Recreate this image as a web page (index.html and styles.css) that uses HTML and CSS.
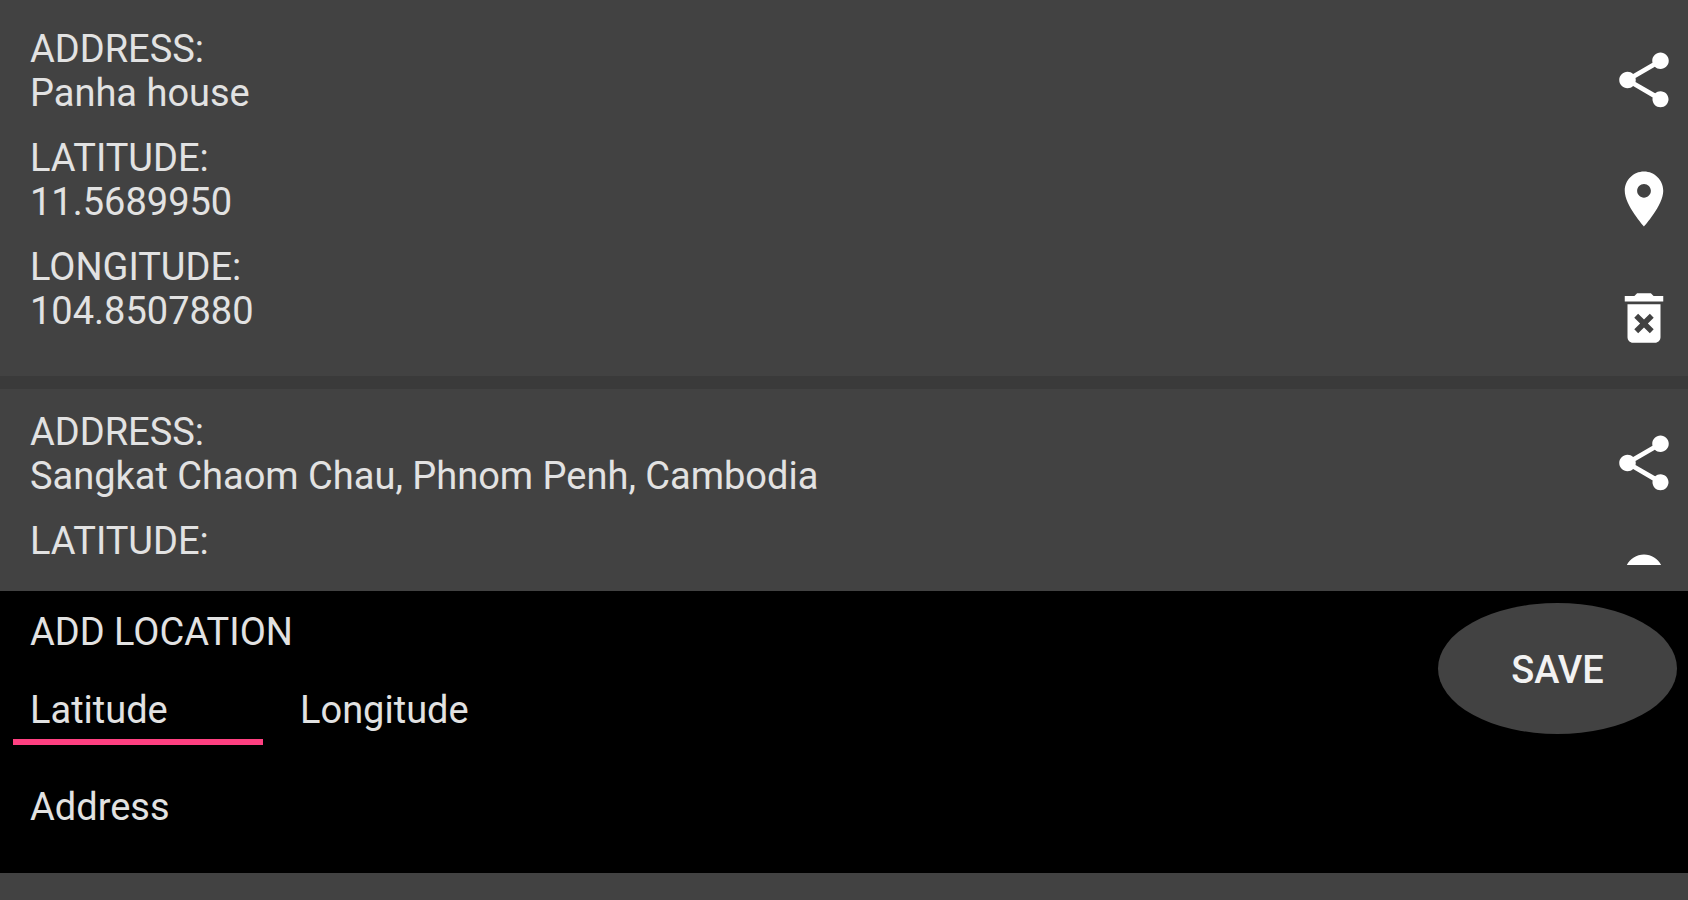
FILE: index.html
```html
<!DOCTYPE html>
<html lang="en">
<head>
  <meta charset="UTF-8">
  <meta name="viewport" content="width=device-width, initial-scale=1">
  <title>Locations</title>
  <link rel="stylesheet" href="styles.css">
</head>
<body>
  <!-- icon shapes shared by every card -->
  <svg class="sprite" aria-hidden="true">
    <symbol id="share" viewBox="0 0 24 24">
      <path d="M18 16.08c-.76 0-1.44.3-1.96.77L8.91 12.7c.05-.23.09-.46.09-.7s-.04-.47-.09-.7l7.05-4.11c.54.5 1.25.81 2.04.81 1.66 0 3-1.34 3-3s-1.34-3-3-3-3 1.34-3 3c0 .24.04.47.09.7L8.04 9.81C7.5 9.31 6.79 9 6 9c-1.66 0-3 1.34-3 3s1.34 3 3 3c.79 0 1.5-.31 2.04-.81l7.12 4.16c-.05.21-.08.43-.08.65 0 1.61 1.31 2.92 2.92 2.92s2.92-1.31 2.92-2.92-1.31-2.92-2.92-2.92z"/>
    </symbol>
    <symbol id="place" viewBox="0 0 24 24">
      <path d="M12 2C8.13 2 5 5.13 5 9c0 5.25 7 13 7 13s7-7.75 7-13c0-3.87-3.13-7-7-7zm0 9.5c-1.38 0-2.5-1.12-2.5-2.5s1.12-2.5 2.5-2.5 2.5 1.12 2.5 2.5-1.12 2.5-2.5 2.5z"/>
    </symbol>
    <symbol id="delete" viewBox="0 0 24 24">
      <path d="M6 19c0 1.1.9 2 2 2h8c1.1 0 2-.9 2-2V7H6v12zm2.46-7.12l1.41-1.41L12 12.59l2.12-2.12 1.41 1.41L13.41 14l2.12 2.12-1.41 1.41L12 15.41l-2.12 2.12-1.41-1.41L10.59 14l-2.13-2.12zM15.5 4l-1-1h-5l-1 1H5v2h14V4z"/>
    </symbol>
  </svg>

  <main class="list">
    <article class="card">
      <dl class="info">
        <div>
          <dt>ADDRESS:</dt>
          <dd>Panha house</dd>
        </div>
        <div>
          <dt>LATITUDE:</dt>
          <dd>11.5689950</dd>
        </div>
        <div>
          <dt>LONGITUDE:</dt>
          <dd>104.8507880</dd>
        </div>
      </dl>
      <div class="actions">
        <button class="icon-btn" aria-label="Share"><svg><use href="#share"/></svg></button>
        <button class="icon-btn" aria-label="Show on map"><svg><use href="#place"/></svg></button>
        <button class="icon-btn" aria-label="Delete"><svg><use href="#delete"/></svg></button>
      </div>
    </article>

    <article class="card">
      <dl class="info">
        <div>
          <dt>ADDRESS:</dt>
          <dd>Sangkat Chaom Chau, Phnom Penh, Cambodia</dd>
        </div>
        <div>
          <dt>LATITUDE:</dt>
        </div>
      </dl>
      <div class="actions">
        <button class="icon-btn" aria-label="Share"><svg><use href="#share"/></svg></button>
        <button class="icon-btn" aria-label="Show on map"><svg><use href="#place"/></svg></button>
      </div>
    </article>
  </main>

  <form class="add-form">
    <div class="fields">
      <h2>ADD LOCATION</h2>
      <div class="coords">
        <input class="active" type="text" id="latitude" placeholder="Latitude" aria-label="Latitude">
        <input type="text" id="longitude" placeholder="Longitude" aria-label="Longitude">
      </div>
      <input class="wide" type="text" id="address" placeholder="Address" aria-label="Address">
    </div>
    <button class="save" type="button">SAVE</button>
  </form>
</body>
</html>
```
FILE: styles.css
```css
* {
  box-sizing: border-box;
}

body {
  margin: 0;
  height: 100vh;
  display: flex;
  flex-direction: column;
  background-color: #424242;
  color: #e2e2e2;
  font-family: Roboto, Arial, sans-serif;
  font-size: 38px;
  line-height: 44px;
}

.sprite {
  display: none;
}

.list {
  flex: 1;
  min-height: 0;
  overflow: hidden;
}

.card {
  display: flex;
  justify-content: space-between;
  padding: 27px 11px 25px 30px;
}

.card + .card {
  border-top: 13px solid #3a3a3a;
  padding-top: 21px;
}

.info {
  display: flex;
  flex-direction: column;
  gap: 21px;
  margin: 0;
}

.info dd {
  margin: 0;
}

.actions {
  display: flex;
  flex-direction: column;
  gap: 53px;
  padding-top: 20px;
}

.icon-btn {
  width: 66px;
  height: 66px;
  padding: 0;
  border: none;
  background: none;
  cursor: pointer;
}

.icon-btn svg {
  display: block;
  width: 66px;
  height: 66px;
  fill: #fff;
}

.add-form {
  display: flex;
  justify-content: space-between;
  align-items: flex-start;
  margin: 26px 0 27px;
  padding: 12px 11px 31px 13px;
  background-color: #000;
}

.fields {
  flex: 1;
  padding-top: 7px;
}

.fields h2 {
  margin: 0 0 22px 17px;
  font-size: 38px;
  font-weight: normal;
}

.coords {
  display: flex;
  gap: 20px;
  margin-bottom: 28px;
}

.fields input {
  width: 250px;
  height: 69px;
  padding: 12px 0 7px 17px;
  border: none;
  border-bottom: 6px solid transparent;
  background: none;
  color: #e2e2e2;
  font: inherit;
  outline: none;
}

.fields input::placeholder {
  color: #e2e2e2;
  opacity: 1;
}

.fields input.active,
.fields input:focus {
  border-bottom-color: #ff4081;
}

.fields input.wide {
  display: block;
  width: 100%;
}

.save {
  width: 239px;
  height: 131px;
  padding: 3px 0 0;
  border: none;
  border-radius: 50%;
  background-color: #424242;
  color: #f2f2f2;
  font: inherit;
  font-weight: 500;
  cursor: pointer;
}
```
